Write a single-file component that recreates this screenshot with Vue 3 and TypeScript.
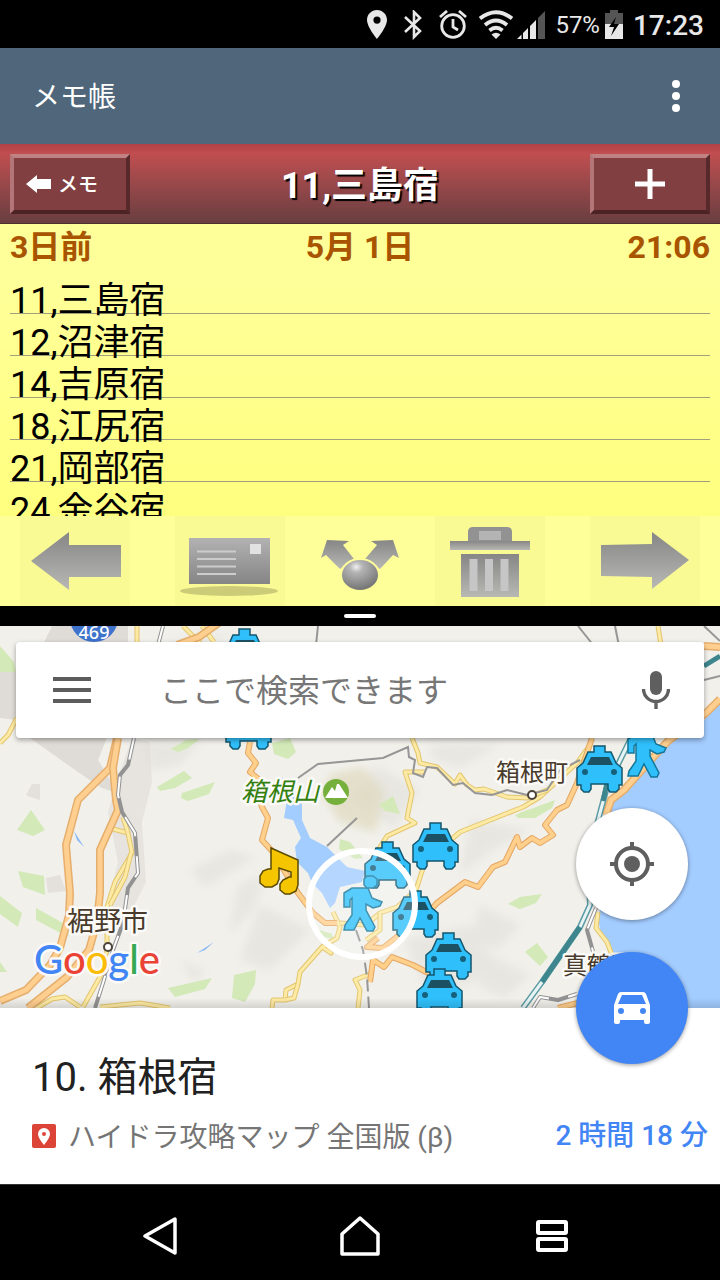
<script setup lang="ts">
import { ref } from 'vue'

interface Marker {
  x: number
  y: number
}

interface Road {
  kind: 'yellow' | 'orange' | 'trunk' | 'rail'
  points: string
}

const memoLines: string[] = [
  '11,三島宿',
  '12,沼津宿',
  '14,吉原宿',
  '18,江尻宿',
  '21,岡部宿',
  '24,金谷宿',
]

const query = ref('')

const taxis: Marker[] = [
  { x: 221, y: 628 },
  { x: 225, y: 702 },
  { x: 576, y: 745 },
  { x: 412, y: 822 },
  { x: 364, y: 841 },
  { x: 392, y: 890 },
  { x: 425, y: 932 },
  { x: 416, y: 968 },
]

const walkers: Marker[] = [
  { x: 627, y: 721 },
  { x: 343, y: 875 },
]

const roads: Road[] = [
  { kind: 'yellow', points: '0,743 8,735 17,718' },
  { kind: 'yellow', points: '137,626 137,645' },
  { kind: 'yellow', points: '183,626 202,645' },
  { kind: 'yellow', points: '202,626 214,642' },
  { kind: 'yellow', points: '658,626 661,645' },
  { kind: 'yellow', points: '113,829 128,833 132,853 115,882 107,907 107,943' },
  { kind: 'yellow', points: '123,817 128,833' },
  { kind: 'yellow', points: '131,853 125,877 110,905' },
  { kind: 'yellow', points: '107,950 100,977 83,1007' },
  { kind: 'yellow', points: '37,1008 52,999 65,997 80,1007' },
  { kind: 'yellow', points: '100,1007 140,1003 170,1008' },
  { kind: 'yellow', points: '272,1008 273,1000 285,1000 286,990 298,984 300,972 322,947 331,953 322,947 337,938 340,927 333,912' },
  { kind: 'yellow', points: '285,1000 294,998 298,984' },
  { kind: 'yellow', points: '358,1008 360,990 355,980 370,974' },
  { kind: 'yellow', points: '340,923 366,925 380,913 397,907 416,890 425,862 460,832 523,807 540,797 577,763 590,745' },
  { kind: 'yellow', points: '380,913 380,930 366,940' },
  { kind: 'yellow', points: '375,855 387,836 415,823 407,818 412,793 405,772 425,772' },
  { kind: 'yellow', points: '412,738 418,753 420,763 437,767 455,784 460,775 467,785 475,790 484,789 507,797 527,798 547,790' },
  { kind: 'trunk', points: '177,645 199,637 220,622' },
  { kind: 'trunk', points: '704,646 720,647' },
  { kind: 'trunk', points: '720,699 706,713 668,741 648,763 624,790 611,800 606,815' },
  { kind: 'yellow', points: '598,912 596,928 607,942 612,955' },
  { kind: 'orange', points: '250,742 248,753 256,763 250,772 261,781 258,795 262,807 268,818 262,840 272,851 298,893 313,913 325,923 337,923' },
  { kind: 'orange', points: '592,738 577,783 567,805 557,810 545,825 553,835 540,843 532,838 520,847 517,837 505,862 493,867 478,887 465,882 437,903 420,922 403,932 383,948 367,947 378,938' },
  { kind: 'orange', points: '370,982 373,960 384,967 392,957 413,965 430,974' },
  { kind: 'orange', points: '558,1008 590,1000' },
  { kind: 'trunk', points: '117,738 110,768 78,800 66,845 70,893 69,915 60,948 50,965 26,990 0,1001' },
  { kind: 'trunk', points: '118,738 113,768 116,800 118,810 100,850 100,893 97,922 89,950 67,977 28,1008' },
  { kind: 'rail', points: '134,738 128,765 120,775 118,795 122,812 135,833 138,873 128,888 123,923 113,950 103,983 95,1008' },
  { kind: 'rail', points: '163,626 158,645' },
  { kind: 'rail', points: '596,908 587,930 594,955' },
  { kind: 'rail', points: '533,1008 540,997 558,1000 577,994' },
]

const boundaries: string[] = [
  '298,778 318,764 383,758 408,747 409,757 415,760 413,773 423,777 427,767 437,768 453,785 463,783 475,793 492,795 507,790 527,795 547,790 560,770 580,760',
  '578,626 594,646',
  '615,626 619,646',
  '704,626 720,641',
  '704,680 720,676',
  '327,846 357,818',
  '318,626 316,645',
]

const greens: string[] = [
  '0,646 14,662 16,672 0,672',
  '171,749 186,740 200,739 188,748 178,752',
  '157,787 184,771 192,778 175,788 160,791',
  '182,793 215,782 209,794 188,801 181,798',
  '272,743 290,738 296,752 288,759 274,754',
  '17,830 31,810 45,830 33,836',
  '18,871 44,876 45,895 23,887',
  '0,896 22,913 18,927 0,914',
  '36,908 70,927 68,937 36,920',
  '168,988 212,978 205,989 175,997',
  '234,975 256,970 255,984 245,1002 232,998',
  '0,962 7,972 0,972',
  '379,805 393,796 400,814 385,811',
  '340,839 350,842 363,858 355,859 339,849',
  '310,927 332,934 334,940 322,936',
  '515,815 555,800 552,808 535,818 518,818',
  '508,904 520,897 542,894 536,903 520,909',
  '525,952 537,943 548,957 540,966',
  '519,813 530,809 527,818',
]

const hills: string[] = [
  '190,870 232,850 255,858 205,887',
  '238,885 266,874 253,910 229,934',
  '143,740 200,742 180,765 150,770',
  '430,745 500,744 460,768 432,759',
  '470,820 530,830 492,850 460,875',
  '405,940 470,925 500,970 430,1000',
  '480,905 520,925 498,950 470,940',
  '260,905 310,930 270,970 240,960',
  '375,765 420,790 395,828 350,800',
  '160,640 240,632 205,643',
  '180,960 205,971 194,983',
  '490,955 530,975 505,998 478,986',
]
</script>

<template>
  <div class="screen">
    <header class="status">
      <svg width="20" height="30" viewBox="0 0 20 30" aria-label="位置情報">
        <path fill="#e8e8e8" fill-rule="evenodd" d="M10 0C4.400 0 0 4.400 0 10c0 7 10 19 10 19s10-12 10-19C20 4.400 15.600 0 10 0zm0 6.500a3.600 3.600 0 1 1 0 7.200 3.600 3.600 0 0 1 0-7.200z" />
      </svg>
      <svg class="bt" width="18" height="30" viewBox="0 0 18 30" aria-label="Bluetooth">
        <path d="M1 7l15 14-6 6V2l6 6L1 22" fill="none" stroke="#e8e8e8" stroke-width="2.600" />
      </svg>
      <svg class="alarm" width="28" height="30" viewBox="0 0 28 30" aria-label="アラーム">
        <g fill="none" stroke="#e8e8e8" stroke-width="2.800">
          <circle cx="14" cy="16" r="11.300" />
          <path d="M14 9v8l5 3M1 7l7-6M27 7l-7-6" />
        </g>
      </svg>
      <svg class="wifi" width="34" height="30" viewBox="0 0 34 30" aria-label="Wi-Fi">
        <g fill="none" stroke="#e8e8e8" stroke-width="3.800">
          <path d="M1 8.500Q17-4 33 8.500M6 15q11-9 22 0M10.500 20.500q6.500-5.500 13 0" />
        </g>
        <path d="M12.500 24.500q4.500-3.500 9 0L17 29z" fill="#e8e8e8" />
      </svg>
      <svg class="signal" width="29" height="30" viewBox="0 0 29 30" aria-label="電波">
        <path d="M0 29l4.500-4.500V29zM6 29v-6l5-5v11zM13 29V16l6-6v19z" fill="#e8e8e8" />
        <path d="M21 29V8l7-7v28z" fill="#555" />
      </svg>
      <span class="percent">57%</span>
      <svg class="battery" width="20" height="30" viewBox="0 0 20 30" aria-label="充電中">
        <path d="M1 3h5V0h8v3h5v12H1z" fill="#555" />
        <path d="M1 14h18v15H1z" fill="#e8e8e8" />
        <path d="M12 7L5 17h5l-3 9 8-12h-5z" fill="#000" />
      </svg>
      <time class="clock">17:23</time>
    </header>

    <section class="pane">
      <div class="app-bar">
        <h1>メモ帳</h1>
        <button class="plain more" aria-label="その他">
          <svg width="8" height="32" viewBox="0 0 8 32">
            <g fill="#fff"><circle cx="4" cy="4" r="4" /><circle cx="4" cy="16" r="4" /><circle cx="4" cy="28" r="4" /></g>
          </svg>
        </button>
      </div>

      <div class="memo-bar">
        <button class="bevel back">
          <svg width="26" height="18" viewBox="0 0 26 18"><path d="M0 9l11-9v4h14v10H11v4z" fill="#fff" /></svg>
          <span>メモ</span>
        </button>
        <h2>11,三島宿</h2>
        <button class="bevel" aria-label="追加">
          <svg width="30" height="30" viewBox="0 0 30 30"><path d="M15 0v30M0 15h30" stroke="#fff" stroke-width="5" /></svg>
        </button>
      </div>

      <div class="paper">
        <div class="dates">
          <span>3日前</span>
          <span>5月 1日</span>
          <span class="end">21:06</span>
        </div>
        <ul class="lines">
          <li v-for="line in memoLines" :key="line">{{ line }}</li>
        </ul>
      </div>

      <div class="tools">
        <svg class="defs" width="0" height="0" aria-hidden="true">
          <defs>
            <linearGradient id="steel" x1="0" y1="0" x2="0" y2="1">
              <stop offset="0" stop-color="#868686" /><stop offset="1" stop-color="#b8b8b4" />
            </linearGradient>
            <linearGradient id="steelDown" x1="0" y1="0" x2="0" y2="1">
              <stop offset="0" stop-color="#b2b2b2" /><stop offset="1" stop-color="#858585" />
            </linearGradient>
            <radialGradient id="ball" cx="0.400" cy="0.250" r="0.700">
              <stop offset="0" stop-color="#f0f0f0" /><stop offset="0.250" stop-color="#b4b4b4" /><stop offset="1" stop-color="#777" />
            </radialGradient>
          </defs>
        </svg>
        <button class="plain tool" aria-label="前のメモ">
          <svg width="110" height="90" viewBox="0 0 110 90">
            <path d="M11 45l38-29v13h52v32H49v13z" fill="url(#steel)" />
          </svg>
        </button>
        <div class="tool-group">
          <button class="plain tool" aria-label="メール">
            <svg width="110" height="90" viewBox="0 0 110 90">
              <ellipse cx="54" cy="75" rx="49" ry="5" fill="#cccc78" />
              <path d="M14 22h81v46H14z" fill="url(#steelDown)" />
              <path d="M22 35.500h39M22 43h39M22 50.500h39M22 58h39" stroke="#ccc" stroke-width="2" />
              <path d="M75 28h11v10H75z" fill="#e2e2e2" />
            </svg>
          </button>
          <button class="plain tool clear" aria-label="共有">
            <svg width="110" height="90" viewBox="0 0 110 90">
              <path d="M22 24l22 1-6 4 11 14-14 10-14-14-5 3z" fill="url(#steel)" />
              <path d="M88 24l-22 1 6 4-12 14 15 10 13-14 6 3z" fill="url(#steel)" />
              <ellipse cx="55" cy="59" rx="19" ry="16" fill="url(#ball)" stroke="#ffff99" stroke-width="2" />
            </svg>
          </button>
          <button class="plain tool" aria-label="削除">
            <svg width="110" height="90" viewBox="0 0 110 90">
              <path d="M33 27V16q0-5 5-5h34q5 0 5 5v11z" fill="#929292" />
              <path d="M44 15h22v9H44z" fill="#b4b4b4" />
              <path d="M15 25h80v9H15z" fill="url(#steel)" />
              <path d="M26 38h58v43H26z" fill="url(#steel)" />
              <path d="M38.500 43v32M54 43v32M69.500 43v32" stroke="#c6c6c6" stroke-width="8" />
            </svg>
          </button>
        </div>
        <button class="plain tool" aria-label="次のメモ">
          <svg width="110" height="90" viewBox="0 0 110 90">
            <path d="M99 44L62 16v12l-51 1v31l51 1v12z" fill="url(#steel)" />
          </svg>
        </button>
      </div>
    </section>

    <div class="divider"><span class="grip"></span></div>

    <section class="pane">
      <div class="map">
        <svg class="map-art" viewBox="0 626 720 382" preserveAspectRatio="xMidYMid slice" role="img" aria-label="箱根周辺の地図">
          <defs>
            <filter id="soft"><feGaussianBlur stdDeviation="4" /></filter>
            <linearGradient id="edge" x1="0" y1="0" x2="0" y2="1">
              <stop offset="0" stop-color="#000" stop-opacity="0" /><stop offset="1" stop-color="#000" stop-opacity="0.120" />
            </linearGradient>
            <g id="taxi">
              <path d="M18 1h11v6h6l5 11 6 5v17h-3v4l-3 3h-6l-2-3v-5H15v5l-2 3H8l-3-3v-4H1V23l6-5 5-11h6z" fill="#2fc0fb" stroke="#13566e" stroke-width="1.500" />
              <path d="M15 12h18l4 8H11z" fill="#1b5163" />
              <circle cx="9" cy="27" r="3" fill="#17607c" /><circle cx="38" cy="27" r="3" fill="#17607c" />
            </g>
            <g id="walker" fill="#2fc0fb" stroke="#13769a" stroke-width="1.500">
              <path d="M9 13h16l4 10 10 4-2 4-7 2-7-4v6l9 17-2 4h-6l-7-13-6 12H1l1-5 7-10V23l-2 2v7H1V18z" />
              <path d="M24 1h6l4 3v6l-4 3h-6l-3-3V4z" />
            </g>
          </defs>

          <rect y="626" width="720" height="382" fill="#f1f0eb" />
          <path d="M0 672h30l22-46h76v32l-22 82-8 20 12 20 4 12-12-4-24-16-48-34L16 720 0 718z" fill="#dfdbd6" />
          <path d="M132 738l18 4 2 40-10 40 4 60-20 40-20-10 12-50-10-50 12-40z" fill="#e7e4df" />
          <path d="M46 878l14-3 6 16-18 2zM26 795l6-11h8v16l-10-3z" fill="#e4e1dc" />
          <g fill="#dfddd7" opacity="0.500" filter="url(#soft)">
            <polygon v-for="shape in hills" :key="shape" :points="shape" />
          </g>
          <path d="M330 775l32-8 22 25-8 40-36-10-18-28z" fill="#dfd9bd" opacity="0.700" filter="url(#soft)" />
          <g fill="#d3e9b8">
            <polygon v-for="shape in greens" :key="shape" :points="shape" />
          </g>
          <polygon fill="#a3ccff" points="280,777 292,780 295,790 302,805 302,820 310,838 327,847 347,867 365,871 362,882 340,887 335,903 330,908 322,893 312,883 308,873 297,862 295,847 301,838 293,820 284,818 287,800" />
          <path d="M74 831l10 16-7-7zM197 953l17-11-9 8z" fill="#8ab9f6" />
          <polygon fill="#a3ccff" points="720,703 704,720 670,741 650,764 626,790 612,803 600,830 592,870 600,910 598,917 600,930 612,950 640,1008 720,1008" />

          <template v-for="road in roads" :key="road.points">
            <polyline :points="road.points" :class="['road', road.kind, 'casing']" />
            <polyline :points="road.points" :class="['road', road.kind]" />
          </template>
          <polyline v-for="line in boundaries" :key="line" :points="line" class="boundary" />
          <polyline points="356,930 363,950 367,977 369,1008" class="boundary dashed" />
          <g fill="none" stroke-linejoin="round">
            <polyline points="631,738 607,787 600,813 588,860 590,905 580,927 542,982 523,1008" stroke="#5b9ba3" stroke-width="6" />
            <polyline points="631,738 607,787 600,813 588,860 590,905 580,927 542,982 523,1008" stroke="#e8f3f4" stroke-width="3" />
            <path d="M607 783l-4 18M580 927l-38 55M704 666l16-10" stroke="#3d868d" stroke-width="5" />
          </g>

          <circle cx="94" cy="618" r="24" fill="#3e72cb" />
          <text x="94" y="639" class="shield">469</text>

          <g class="place">
            <text x="496" y="781" class="town">箱根町</text>
            <text x="563" y="974" class="town">真鶴町</text>
            <text x="67" y="931" class="city">裾野市</text>
          </g>
          <g fill="#fff" stroke="#4c4438" stroke-width="2">
            <circle cx="532" cy="795" r="4" /><circle cx="108" cy="947" r="4" />
          </g>
          <text x="241" y="801" class="peak">箱根山</text>
          <circle cx="336" cy="792" r="13" fill="#75b03c" />
          <path d="M325 798l7-11 3 4 2-7h2l9 14z" fill="#fff" />

          <use v-for="m in taxis" :key="`${m.x}-${m.y}`" href="#taxi" :x="m.x" :y="m.y" />
          <use v-for="m in walkers" :key="`${m.x}-${m.y}`" href="#walker" :x="m.x" :y="m.y" />
          <g transform="translate(259 847)">
            <path fill-rule="evenodd" d="M12 1l27 12v25l-2 6-6 3h-5l-5-4v-6l3-4 6-3h2v-5l-12-4v11l-2 5-5 3H6l-5-4v-7l3-5 5-2h3z" fill="#f5c500" stroke="#5b4a00" stroke-width="1.500" />
          </g>
          <circle cx="362" cy="904" r="53" fill="#fff" fill-opacity="0.200" stroke="#fff" stroke-width="6" />

          <text x="34" y="974" class="google"><tspan fill="#4285f4">G</tspan><tspan fill="#ea4335">o</tspan><tspan fill="#fbbc05">o</tspan><tspan fill="#4285f4">g</tspan><tspan fill="#34a853">l</tspan><tspan fill="#ea4335">e</tspan></text>
          <rect y="998" width="720" height="10" fill="url(#edge)" />
        </svg>

        <form class="search" @submit.prevent>
          <button type="button" class="plain menu" aria-label="メニュー">
            <svg width="38" height="26" viewBox="0 0 38 26"><path d="M0 2h38M0 13h38M0 24h38" stroke="#5c5c5c" stroke-width="4" /></svg>
          </button>
          <input v-model="query" type="text" placeholder="ここで検索できます" aria-label="ここで検索できます" />
          <button type="button" class="plain mic" aria-label="音声検索">
            <svg width="28" height="38" viewBox="0 0 28 38">
              <rect x="8" y="0" width="12" height="24" rx="6" fill="#5f5f5f" />
              <path d="M1.500 18a12.500 12.500 0 0 0 25 0M14 30v8" fill="none" stroke="#5f5f5f" stroke-width="3.400" />
            </svg>
          </button>
        </form>

        <button class="plain fab locate" aria-label="現在地">
          <svg width="44" height="44" viewBox="0 0 44 44">
            <circle cx="22" cy="22" r="8" fill="#5f5f5f" />
            <circle cx="22" cy="22" r="16" fill="none" stroke="#5f5f5f" stroke-width="4" />
            <path d="M22 0v6M22 38v6M0 22h6M38 22h6" stroke="#5f5f5f" stroke-width="4" />
          </svg>
        </button>
        <button class="plain fab drive" aria-label="車での経路">
          <svg width="36" height="32" viewBox="0 0 36 32">
            <path fill="#fff" fill-rule="evenodd" d="M7 0h22q2 0 3 2l4 11v17q0 2-2 2h-2q-2 0-2-2v-2H6v2q0 2-2 2H2q-2 0-2-2V13L4 2q1-2 3-2zM8 3L4 12h28L28 3zM7 16a3 3 0 1 0 0 6 3 3 0 0 0 0-6zm22 0a3 3 0 1 0 0 6 3 3 0 0 0 0-6z" />
          </svg>
        </button>
      </div>

      <div class="card">
        <h2>10. 箱根宿</h2>
        <div class="detail">
          <svg width="24" height="24" viewBox="0 0 24 24">
            <rect width="24" height="24" rx="2" fill="#db4437" />
            <path fill="#fff" fill-rule="evenodd" d="M12 4a6 6 0 0 0-6 6c0 4 6 11 6 11s6-7 6-11a6 6 0 0 0-6-6zm0 4a2 2 0 1 1 0 4 2 2 0 0 1 0-4z" />
          </svg>
          <span class="source">ハイドラ攻略マップ 全国版 (β)</span>
          <span class="duration">2 時間 18 分</span>
        </div>
      </div>
    </section>

    <nav class="nav">
      <button class="plain" aria-label="戻る">
        <svg width="50" height="40" viewBox="0 0 50 40"><path d="M32 3v34L2 20z" fill="none" stroke="#fff" stroke-width="3.500" stroke-linejoin="round" /></svg>
      </button>
      <button class="plain" aria-label="ホーム">
        <svg width="40" height="42" viewBox="0 0 40 42"><path d="M20 3l18 16v20H2V19z" fill="none" stroke="#fff" stroke-width="3.500" stroke-linejoin="round" /></svg>
      </button>
      <button class="plain" aria-label="履歴">
        <svg width="34" height="34" viewBox="0 0 34 34"><g fill="none" stroke="#fff" stroke-width="4"><rect x="3" y="3" width="28" height="11" rx="1" /><rect x="3" y="20" width="28" height="11" rx="1" /></g></svg>
      </button>
    </nav>
  </div>
</template>

<style>
body {
  margin: 0;
  background: #000;
}
</style>

<style scoped>
.screen {
  display: flex;
  flex-direction: column;
  height: 100vh;
  min-height: 960px;
  background: #000;
  color: #000;
  font-family: Roboto, "Noto Sans CJK JP", sans-serif;
}
h1,
h2,
ul {
  margin: 0;
  padding: 0;
  font-weight: 400;
}
svg {
  display: block;
}
.plain {
  display: flex;
  align-items: center;
  justify-content: center;
  padding: 0;
  border: 0;
  background: none;
}

.status {
  display: flex;
  flex: none;
  align-items: center;
  justify-content: flex-end;
  box-sizing: border-box;
  height: 48px;
  padding: 2px 16px 0 0;
  color: #e8e8e8;
}
.bt { margin-left: 17px; }
.alarm { margin-left: 17px; }
.wifi { margin-left: 12px; }
.signal { margin-left: 4px; }
.percent {
  margin-left: 9px;
  font-size: 24px;
}
.battery { margin-left: 4px; }
.clock {
  margin-left: 9px;
  font-size: 28px;
  font-weight: 500;
}

.pane {
  display: flex;
  flex: 1 1 0;
  flex-direction: column;
  min-height: 0;
}
.app-bar {
  display: flex;
  flex: none;
  align-items: center;
  justify-content: space-between;
  height: 96px;
  padding: 0 20px 0 32px;
  background: #50677b;
  color: #fff;
}
.app-bar h1 {
  padding-top: 4px;
  font-size: 28px;
  line-height: 40px;
}
.more {
  width: 48px;
  height: 64px;
}

.memo-bar {
  display: flex;
  flex: none;
  align-items: center;
  justify-content: space-between;
  box-sizing: border-box;
  height: 80px;
  padding: 0 10px;
  border-bottom: 1px solid #4f3030;
  background: linear-gradient(#b04146, #c14e50 12%, #a34a4c 40%, #693e40);
}
.memo-bar h2 {
  padding-top: 4px;
  color: #fff;
  font-size: 36px;
  font-weight: 700;
  line-height: 48px;
  text-shadow: 2px 2px 1px #000;
}
.bevel {
  display: flex;
  align-items: center;
  justify-content: center;
  box-sizing: border-box;
  width: 120px;
  height: 60px;
  padding: 0;
  border: 4px solid;
  border-color: #c08183 #57292b #4b2325 #b37577;
  background: #823f41;
  color: #fff;
}
.back {
  justify-content: flex-start;
  gap: 6px;
  padding-left: 12px;
  font: 500 20px/28px "Noto Sans CJK JP", sans-serif;
}

.paper {
  display: flex;
  flex: 1 1 0;
  flex-direction: column;
  min-height: 0;
  padding: 0 10px;
  overflow: hidden;
  background: linear-gradient(#ffff99, #ffff99 20%, #ffff7e);
}
.dates {
  display: grid;
  flex: none;
  grid-template-columns: 1fr auto 1fr;
  height: 48px;
  color: #a85400;
  font-size: 32px;
  font-weight: 700;
  line-height: 46px;
}
.end {
  text-align: right;
}
.lines {
  flex: 1 1 0;
  min-height: 0;
  padding-top: 8px;
  background: repeating-linear-gradient(transparent 0 41px, #a0a07c 41px 42px);
  font-size: 36px;
  line-height: 42px;
  list-style: none;
}
.lines li {
  height: 42px;
}

.tools {
  display: flex;
  flex: none;
  justify-content: space-between;
  height: 90px;
  padding: 0 20px;
  background: #ffff99;
}
.defs {
  position: absolute;
}
.tool-group {
  display: flex;
  gap: 20px;
}
.tool {
  width: 110px;
  background: #fafa94;
}
.clear {
  background: none;
}

.divider {
  display: flex;
  flex: none;
  align-items: center;
  justify-content: center;
  height: 20px;
}
.grip {
  width: 32px;
  height: 4px;
  border-radius: 2px;
  background: #fff;
}

.map {
  position: relative;
  flex: 1 1 0;
  min-height: 0;
}
.map-art {
  position: absolute;
  width: 100%;
  height: 100%;
}
.road {
  fill: none;
  stroke-linejoin: round;
}
.yellow { stroke: #fdeba5; stroke-width: 3px; }
.yellow.casing { stroke: #e3c46e; stroke-width: 5px; }
.orange { stroke: #ffcf8c; stroke-width: 4px; }
.orange.casing { stroke: #e4a765; stroke-width: 6px; }
.trunk { stroke: #ffcf90; stroke-width: 5px; }
.trunk.casing { stroke: #e6ae6c; stroke-width: 8px; }
.rail { stroke: #fff; stroke-width: 2px; stroke-dasharray: 22px 20px; }
.rail.casing { stroke: #929292; stroke-width: 4px; stroke-dasharray: none; }
.boundary {
  fill: none;
  stroke: #969696;
  stroke-width: 2px;
}
.dashed {
  stroke-dasharray: 12px 5px;
}
.shield {
  fill: #fff;
  font: 500 18px "Noto Sans", sans-serif;
  text-anchor: middle;
}
.place,
.peak,
.google {
  paint-order: stroke;
  stroke: #fbfaf7;
  stroke-linejoin: round;
  stroke-width: 5px;
}
.place {
  fill: #483b2c;
  font-family: "Noto Sans CJK JP", sans-serif;
}
.town { font-size: 24px; }
.city { font-size: 27px; }
.peak {
  fill: #33800f;
  font: italic 26px "Noto Sans CJK JP", sans-serif;
}
.google {
  font: 500 40px Lato, sans-serif;
}

.search {
  position: absolute;
  top: 16px;
  right: 16px;
  left: 16px;
  display: flex;
  height: 96px;
  border-radius: 4px;
  background: #fff;
  box-shadow: 0 2px 5px rgba(0, 0, 0, 0.35);
}
.menu {
  flex: none;
  width: 112px;
}
.mic {
  flex: none;
  width: 96px;
}
.search input {
  flex: 1;
  min-width: 0;
  padding: 0 0 4px 32px;
  border: 0;
  outline: 0;
  background: none;
  color: #333;
  font: 32px "Noto Sans CJK JP", sans-serif;
}
.search input::placeholder {
  color: #777;
  opacity: 1;
}
.fab {
  position: absolute;
  right: 32px;
  z-index: 1;
  width: 112px;
  height: 112px;
  border-radius: 50%;
  box-shadow: 0 1px 4px rgba(0, 0, 0, 0.4);
}
.locate {
  bottom: 88px;
  background: #fff;
}
.drive {
  bottom: -56px;
  background: #4285f4;
}

.card {
  flex: none;
  box-sizing: border-box;
  height: 176px;
  padding: 42px 12px 0 32px;
  background: #fff;
}
.card h2 {
  color: #212121;
  font-size: 40px;
  line-height: 56px;
}
.detail {
  display: flex;
  align-items: center;
  margin-top: 8px;
  font-size: 28px;
  line-height: 40px;
}
.source {
  flex: 1;
  padding-top: 4px;
  margin-left: 12px;
  color: #757575;
}
.duration {
  color: #4285f4;
  font-weight: 500;
}

.nav {
  display: flex;
  flex: none;
  justify-content: center;
  box-sizing: border-box;
  height: 96px;
  padding-top: 6px;
  border-top: 1px solid #333;
}
.nav button {
  width: 192px;
}
</style>
